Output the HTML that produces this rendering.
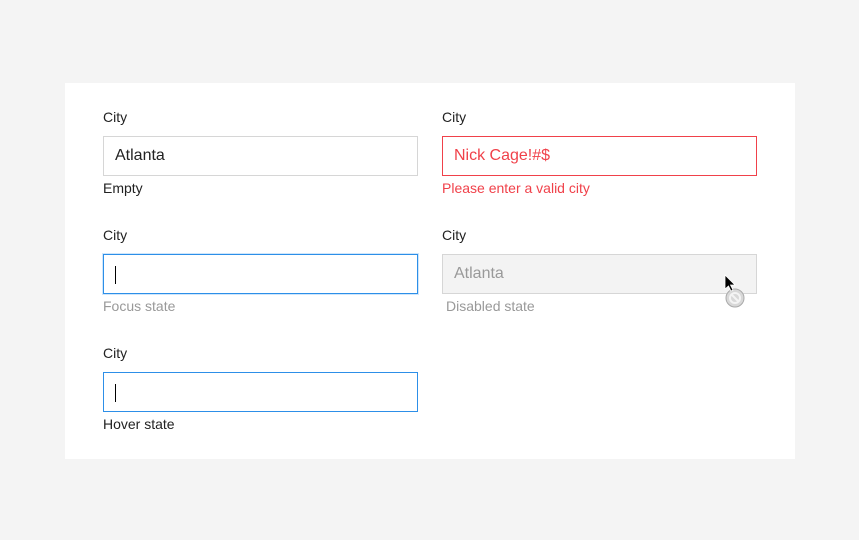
<!DOCTYPE html>
<html><head><style>
body{margin:0;background:#f4f4f4;font-family:"Liberation Sans",Arial,sans-serif;}
.card{position:absolute;left:65px;top:83px;width:730px;height:376px;background:#fff;}
.f{position:absolute;width:315px;}
.lab{position:absolute;top:-1px;left:0;font-size:14px;color:#222;line-height:16px;}
.in{position:absolute;top:26px;left:0;height:38px;border:1px solid #d6d6d6;font-size:16px;line-height:38px;padding-left:11px;box-sizing:content-box;color:#222;width:302px;}
.help{position:absolute;top:70px;left:0;font-size:14px;line-height:16px;color:#222;}
.caret{position:absolute;left:11px;top:11px;width:1px;height:18px;background:#000;}
</style></head><body>
<div class="card"></div>
<div class="f" style="left:103px;top:110px">
 <div class="lab">City</div><div class="in">Atlanta</div><div class="help">Empty</div></div>
<div class="f" style="left:442px;top:110px">
 <div class="lab">City</div><div class="in" style="border-color:#f0414a;color:#f0414a">Nick Cage!#$</div><div class="help" style="color:#f0414a">Please enter a valid city</div></div>
<div class="f" style="left:103px;top:228px">
 <div class="lab">City</div><div class="in" style="border-color:#2d8fe8;box-shadow:0 0 0 1px #cfe6fb"><div class="caret"></div></div><div class="help" style="color:#999">Focus state</div></div>
<div class="f" style="left:442px;top:228px">
 <div class="lab">City</div><div class="in" style="background:#f3f3f3;color:#999">Atlanta</div><div class="help" style="color:#999;left:4px">Disabled state</div></div>
<div class="f" style="left:103px;top:346px">
 <div class="lab">City</div><div class="in" style="border-color:#2d8fe8"><div class="caret"></div></div><div class="help">Hover state</div></div>
<svg style="position:absolute;left:718px;top:270px" width="30" height="40">
<circle cx="17" cy="28" r="9" fill="#d8d8d8" stroke="#aaa"/>
<circle cx="17" cy="28" r="5" fill="none" stroke="#f4f4f4" stroke-width="2"/>
<line x1="13" y1="24" x2="21" y2="32" stroke="#f4f4f4" stroke-width="2"/>
<path d="M7 5 L7 19 L10.5 16 L13 21 L15 20 L12.5 15 L17 15 Z" fill="#000" stroke="#fff" stroke-width="0.8"/>
</svg>
</body></html>
